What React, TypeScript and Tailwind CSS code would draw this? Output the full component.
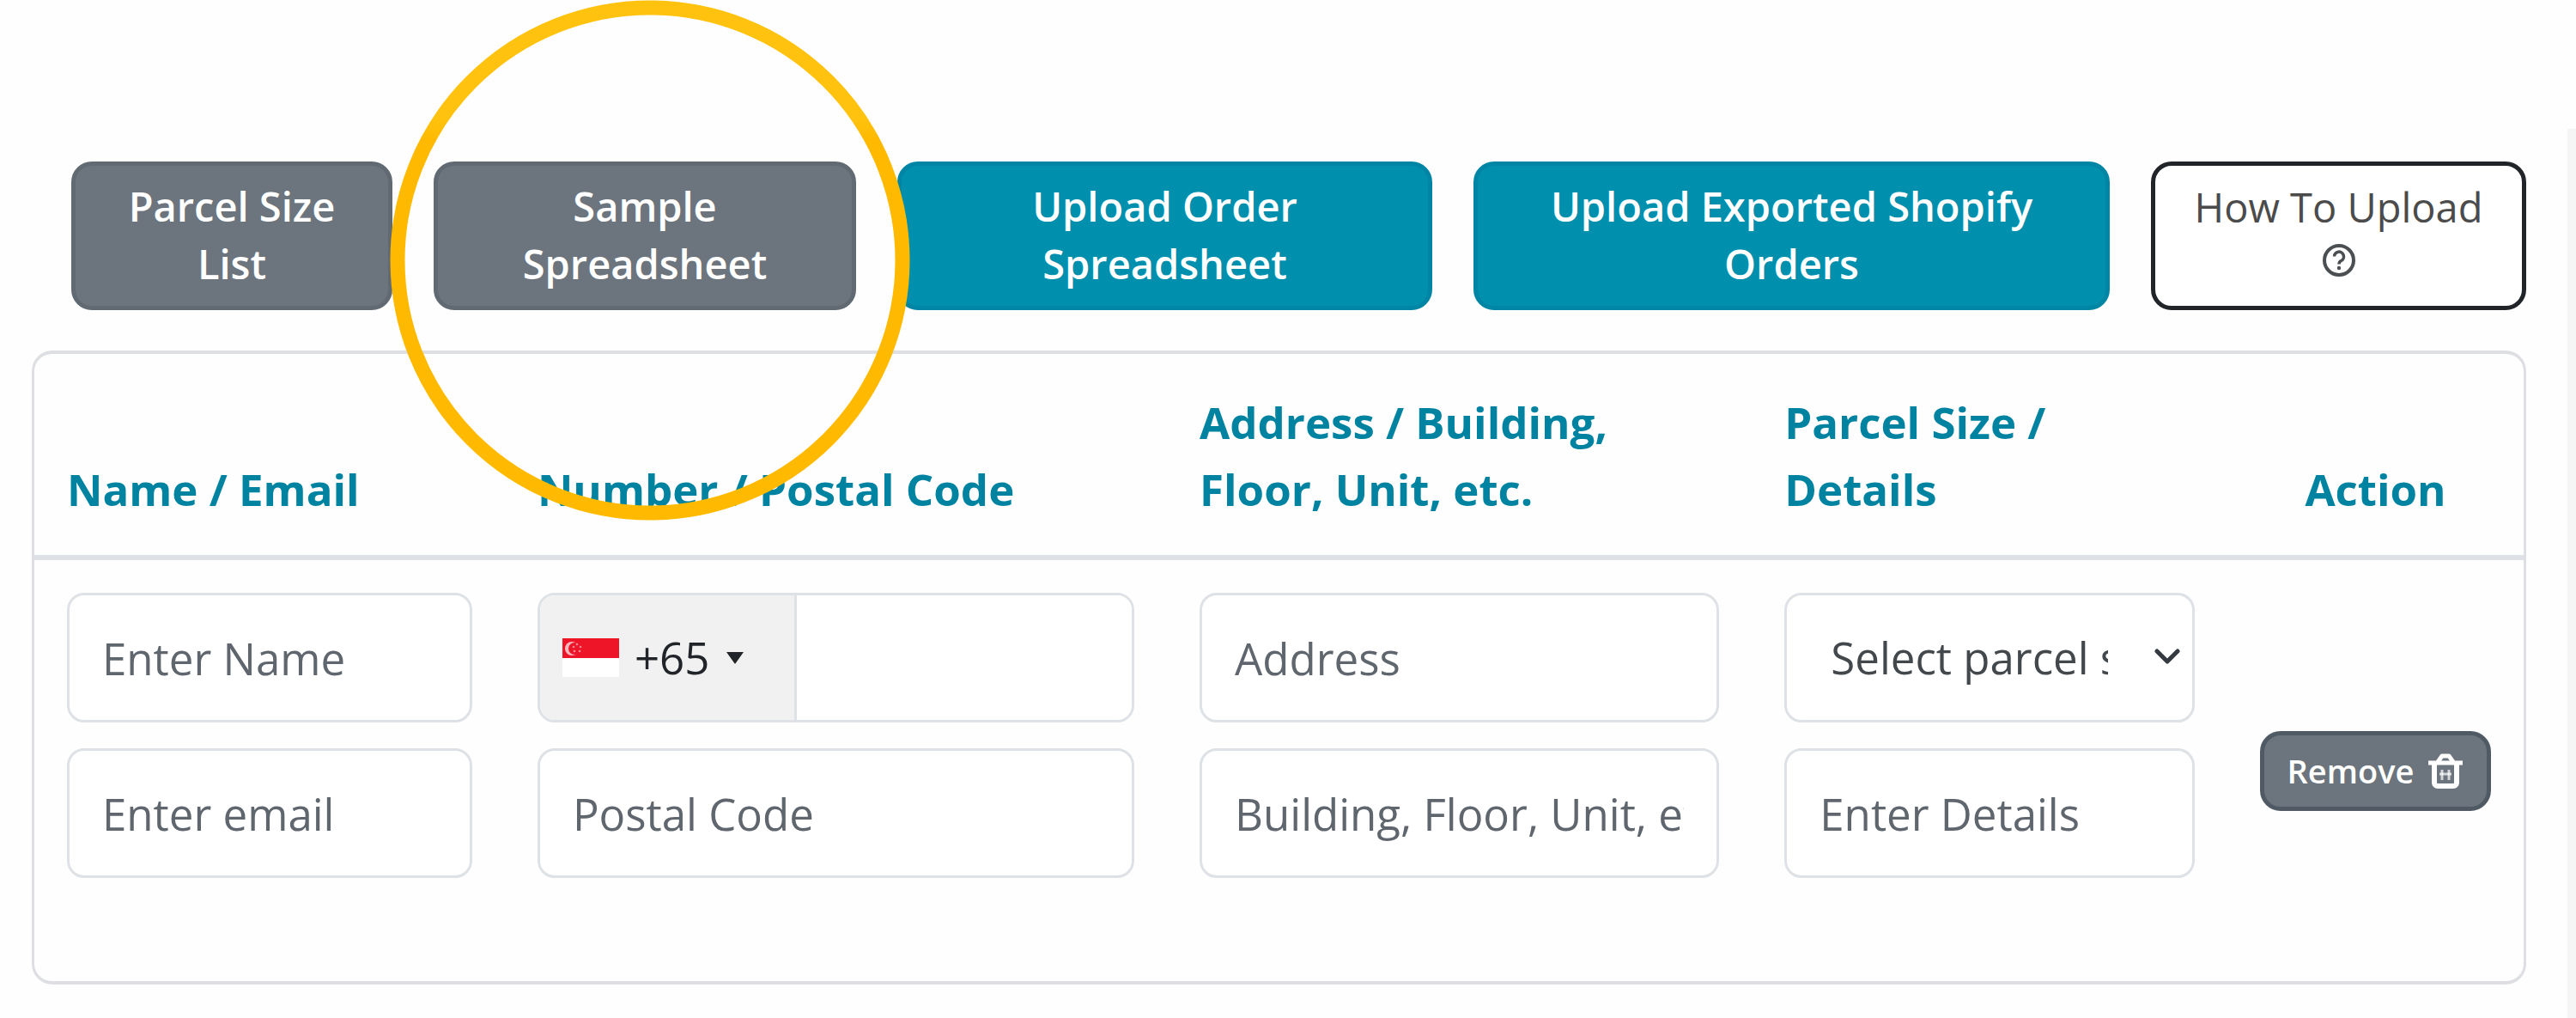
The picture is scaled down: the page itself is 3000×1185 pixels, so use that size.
import { useState } from "react";
import type { ReactNode } from "react";
import { ChevronDown } from "lucide-react";
import clsx from "clsx";

const fieldClass =
  "block w-full h-[151px] rounded-[20px] border-[3px] border-[#dee2e6] bg-white px-[38px] text-[51px] text-[#212529] placeholder:text-[#5f666d] outline-none";

const headClass =
  "px-[38px] pt-10 pb-[38px] align-bottom font-bold text-[51px] leading-[78px] text-[#0083a1]";

const cellClass = "px-[38px] pt-[38px] align-top";

function ToolbarButton({
  variant,
  children,
}: {
  variant: "gray" | "teal" | "outline";
  children: ReactNode;
}) {
  return (
    <button
      type="button"
      className={clsx(
        "min-h-[173px] rounded-[24px] border-[5px] px-3 pb-[2px] text-center text-[47px] leading-[67px]",
        variant === "gray" &&
          "bg-[#6c757d] border-[#616a72] text-white font-semibold",
        variant === "teal" &&
          "bg-[#008fad] border-[#0086a4] text-white font-semibold",
        variant === "outline" && "bg-white border-[#212529] text-[#4b4b4b]"
      )}
    >
      {children}
    </button>
  );
}

function HelpIcon() {
  return (
    <svg
      viewBox="0 0 40 40"
      className="mx-auto mt-2 mb-4 h-10 w-10"
      fill="none"
      stroke="#4b4f52"
      aria-hidden="true"
    >
      <circle cx="20" cy="20" r="17" strokeWidth="4" />
      <path
        d="M14.5 15.5a5.5 5.5 0 1 1 8 5c-1.800 1-2.500 2-2.500 4"
        strokeWidth="3.500"
      />
      <circle cx="20" cy="29" r="1.200" strokeWidth="2" />
    </svg>
  );
}

function TrashIcon() {
  return (
    <svg
      viewBox="0 0 42 42"
      className="h-[42px] w-[42px]"
      fill="none"
      stroke="currentColor"
      strokeWidth="5"
      strokeLinejoin="round"
      aria-hidden="true"
    >
      <path d="M1 12h40" />
      <path d="M12 11l5-7h8l5 7" />
      <path d="M8 13v22a4 4 0 0 0 4 4h18a4 4 0 0 0 4-4V13" strokeWidth="6" />
      <path d="M14 25h14" strokeWidth="3" opacity="0.700" />
      <path d="M17 20v12M25 20v12" strokeWidth="3" opacity="0.700" />
    </svg>
  );
}

function SingaporeFlag() {
  return (
    <svg viewBox="0 0 66 45" className="h-[45px] w-[66px]" aria-hidden="true">
      <rect width="66" height="45" fill="#fff" />
      <rect width="66" height="23" fill="#ee1528" />
      <circle cx="11" cy="12" r="8" fill="#fff" opacity="0.700" />
      <circle cx="14" cy="12" r="7" fill="#ee1528" />
      <g fill="#fff" opacity="0.500">
        <circle cx="17" cy="7" r="1.300" />
        <circle cx="13" cy="10" r="1.300" />
        <circle cx="21" cy="10" r="1.300" />
        <circle cx="14" cy="15" r="1.300" />
        <circle cx="20" cy="15" r="1.300" />
      </g>
    </svg>
  );
}

// ring drawn over the toolbar to point at the sample file
function Highlight() {
  return (
    <svg
      viewBox="0 0 606 606"
      className="pointer-events-none absolute top-0 left-[454px] h-[606px] w-[606px]"
      fill="none"
      aria-hidden="true"
    >
      <defs>
        <linearGradient id="ring" x1="0" y1="0" x2="0" y2="1">
          <stop offset="0.220" stopColor="#ffc20e" />
          <stop offset="0.260" stopColor="#ffba00" />
        </linearGradient>
      </defs>
      <circle cx="303" cy="303" r="294" stroke="url(#ring)" strokeWidth="17" />
    </svg>
  );
}

export default function App() {
  const [parcel, setParcel] = useState("");

  return (
    <div
      className="relative flex min-h-screen bg-[#fefefe]"
      style={{ fontFamily: '"Open Sans", "Noto Sans", sans-serif' }}
    >
      <main className="min-w-0 flex-1 pt-[188px] pr-12 pl-[37px]">
        <div className="grid grid-cols-[374fr_492fr_623fr_741fr_437fr] gap-12 pl-[46px]">
          <ToolbarButton variant="gray">
            Parcel Size
            <br />
            List
          </ToolbarButton>
          <ToolbarButton variant="gray">
            Sample
            <br />
            Spreadsheet
          </ToolbarButton>
          <ToolbarButton variant="teal">
            Upload Order
            <br />
            Spreadsheet
          </ToolbarButton>
          <ToolbarButton variant="teal">
            Upload Exported Shopify
            <br />
            Orders
          </ToolbarButton>
          <ToolbarButton variant="outline">
            How To Upload
            <HelpIcon />
          </ToolbarButton>
        </div>

        <div className="mt-[47px] rounded-[24px] border-x-[3px] border-y-4 border-[#dedfe2]">
          <table className="w-full table-fixed border-collapse">
            <colgroup>
              <col className="w-[18.9%]" />
              <col className="w-[26.6%]" />
              <col className="w-[23.5%]" />
              <col className="w-[19.1%]" />
              <col className="w-[11.9%]" />
            </colgroup>
            <thead>
              <tr className="border-b-[6px] border-[#dee2e6] text-left">
                <th className={headClass}>Name / Email</th>
                <th className={headClass}>Number / Postal Code</th>
                <th className={headClass}>
                  Address / Building,
                  <br />
                  Floor, Unit, etc.
                </th>
                <th className={headClass}>
                  Parcel Size /<br />
                  Details
                </th>
                <th className={clsx(headClass, "text-center")}>Action</th>
              </tr>
            </thead>
            <tbody>
              <tr className="h-[493px]">
                <td className={cellClass}>
                  <div className="flex flex-col gap-[30px]">
                    <input
                      className={fieldClass}
                      aria-label="Name"
                      placeholder="Enter Name"
                    />
                    <input
                      type="email"
                      className={fieldClass}
                      aria-label="Email"
                      placeholder="Enter email"
                    />
                  </div>
                </td>
                <td className={cellClass}>
                  <div className="flex flex-col gap-[30px]">
                    <div className="flex h-[151px] overflow-hidden rounded-[20px] border-[3px] border-[#dee2e6] bg-white">
                      <button
                        type="button"
                        aria-label="Country code"
                        className="flex w-[299px] shrink-0 items-center border-r-[3px] border-[#dee2e6] bg-[#f1f1f1] pl-[26px] text-[51px] text-[#212529]"
                      >
                        <SingaporeFlag />
                        <span className="ml-[18px]">+65</span>
                        <svg
                          viewBox="0 0 20 14"
                          className="ml-5 h-[14px] w-5"
                          aria-hidden="true"
                        >
                          <path d="M0 0h20L10 14z" fill="#212529" />
                        </svg>
                      </button>
                      <input
                        type="tel"
                        aria-label="Number"
                        className="w-full min-w-0 bg-white px-[38px] text-[51px] outline-none"
                      />
                    </div>
                    <input
                      className={fieldClass}
                      aria-label="Postal code"
                      placeholder="Postal Code"
                    />
                  </div>
                </td>
                <td className={cellClass}>
                  <div className="flex flex-col gap-[30px]">
                    <input
                      className={fieldClass}
                      aria-label="Address"
                      placeholder="Address"
                    />
                    <input
                      className={fieldClass}
                      aria-label="Building, floor, unit"
                      placeholder="Building, Floor, Unit, etc."
                    />
                  </div>
                </td>
                <td className={cellClass}>
                  <div className="flex flex-col gap-[30px]">
                    <div className="relative">
                      <select
                        aria-label="Parcel size"
                        value={parcel}
                        onChange={(e) => setParcel(e.target.value)}
                        className="block h-[151px] w-full appearance-none overflow-hidden rounded-[20px] border-[3px] border-[#dee2e6] bg-white pr-[98px] pl-[51px] text-[51px] text-[#43484d] outline-none"
                      >
                        <option value="">Select parcel size</option>
                      </select>
                      <ChevronDown
                        className="pointer-events-none absolute top-[50px] right-2 h-12 w-12 text-[#343a40]"
                        strokeWidth={2.5}
                      />
                    </div>
                    <input
                      className={fieldClass}
                      aria-label="Details"
                      placeholder="Enter Details"
                    />
                  </div>
                </td>
                <td className="px-[38px] align-middle">
                  <button
                    type="button"
                    className="flex h-[93px] w-full items-center justify-center gap-4 rounded-[24px] border-[5px] border-[#4f5a64] bg-[#6c757d] text-[38px] font-semibold text-white"
                  >
                    Remove
                    <TrashIcon />
                  </button>
                </td>
              </tr>
            </tbody>
          </table>
        </div>
      </main>
      <div className="mt-[150px] w-[10px] bg-[#f5f5f5]" />
      <Highlight />
    </div>
  );
}
